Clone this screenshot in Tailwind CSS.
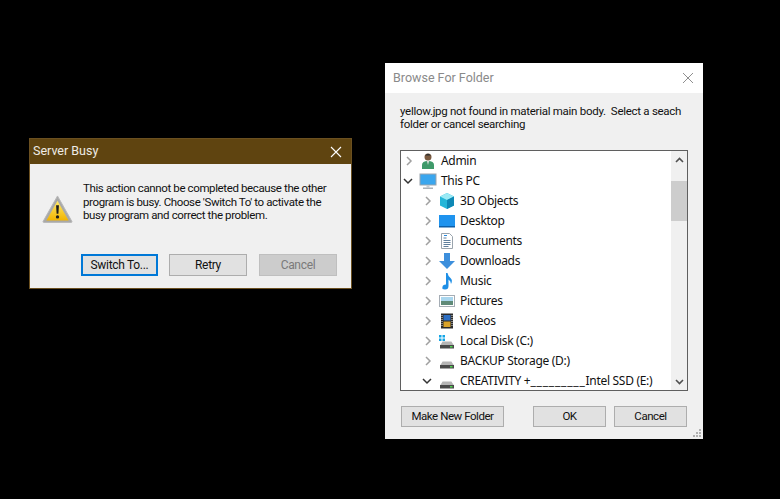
<!doctype html>
<html lang="en"><head><meta charset="utf-8"><title>Dialogs</title>
<script src="https://cdn.jsdelivr.net/npm/@tailwindcss/browser@4"></script></head>
<body class="bg-black">
<main class="relative w-[780px] h-[499px] bg-black overflow-hidden font-['Roboto',sans-serif] text-[11.5px] tracking-[-0.38px] text-[#111]">

<!-- Server Busy -->
<section class="absolute left-[29px] top-[138px] w-[323px] h-[151px] bg-[#f0f0f0] border border-[#6b5020] flex flex-col">
  <header class="h-[25px] shrink-0 bg-[#5f4410] flex items-center justify-between pl-[3px] pr-[9px] text-white/90 text-[12.5px] tracking-normal">
    <span>Server Busy</span>
    <svg width="12" height="12" viewBox="0 0 12 12" fill="none" stroke="#fff" stroke-width="1.1"><path d="M1 1l10 10M11 1L1 11"/></svg>
  </header>
  <div class="flex-1 flex flex-col pt-[18px] pl-[12px] pr-[14px] pb-[12px]">
    <div class="flex gap-[10px] items-start">
      <svg class="mt-[13px] shrink-0" width="31" height="28" viewBox="0 0 32 29">
        <defs><linearGradient id="w" x1="0" y1="0" x2="0" y2="1"><stop offset="0" stop-color="#ffe96a"/><stop offset="1" stop-color="#f2b400"/></linearGradient></defs>
        <path d="M16 1L31 27.5Q31 28.500 30 28.500H2Q1 28.500 1 27.500Z" fill="#a9a9a9" stroke="#b9b9b9"/>
        <path d="M16 6L27.500 26.500H4.500Z" fill="url(#w)"/>
        <path d="M14.500 10.500h3l-.6 9h-1.800z" fill="#1c1c1c"/><circle cx="16" cy="22.700" r="1.700" fill="#1c1c1c"/>
      </svg>
      <p class="leading-[13.5px] w-[250px]">This action cannot be completed because the other program is busy. Choose 'Switch To' to activate the busy program and correct the problem.</p>
    </div>
    <div class="mt-auto flex justify-end gap-[11px] text-[12px] tracking-[-0.3px]">
      <button class="w-[77px] h-[22px] bg-[#e1e1e1] border-2 border-[#0078d7] flex items-center justify-center">Switch To...</button>
      <button class="w-[78px] h-[22px] bg-[#e1e1e1] border border-[#adadad] flex items-center justify-center">Retry</button>
      <button class="w-[78px] h-[22px] bg-[#cccccc] border border-[#bfbfbf] text-[#7a7a7a] flex items-center justify-center ml-px">Cancel</button>
    </div>
  </div>
</section>

<!-- Browse For Folder -->
<section class="absolute left-[385px] top-[63px] w-[318px] h-[376px] bg-[#f0f0f0] flex flex-col">
  <header class="h-[30px] shrink-0 bg-white flex items-center justify-between pl-[8px] pr-[9px] text-[#8a8a8a] text-[12.5px] tracking-normal">
    <span>Browse For Folder</span>
    <svg width="12" height="12" viewBox="0 0 12 12" fill="none" stroke="#8f8f8f" stroke-width="1"><path d="M1 1l10 10M11 1L1 11"/></svg>
  </header>
  <div class="relative flex-1 flex flex-col px-[15px] pt-[12px]">
    <p class="leading-[13px] w-[290px] h-[26px] tracking-[-0.28px]">yellow.jpg not found in material main body.&nbsp; Select a seach folder or cancel searching</p>
    <div class="mt-[19px] w-[288px] h-[241px] bg-white border border-[#5f5f5f] flex overflow-hidden">
      <ul class="flex-1 min-w-0 flex flex-col font-['Noto_Sans',sans-serif] text-[12px] tracking-[-0.3px]">
        <li class="h-[20px] flex items-center shrink-0">
          <svg class="ml-[3px]" width="10" height="10" viewBox="0 0 10 10" fill="none" stroke="#a0a0a0" stroke-width="1.500"><path d="M3 1l4 4-4 4"/></svg>
          <svg class="ml-[5px]" width="18" height="18" viewBox="0 0 18 18"><circle cx="9" cy="5" r="3.500" fill="#7a5a40"/><path d="M6 3.500Q9 0 12 3.500z" fill="#2f2f2f"/><path d="M3 17v-4q0-4 6-4t6 4v4z" fill="#3f9a6a"/><path d="M8 9h2l-1 4z" fill="#e8e8e8"/></svg>
          <span class="ml-[4px]">Admin</span></li>
        <li class="h-[20px] flex items-center shrink-0">
          <svg class="ml-[2px]" width="10" height="10" viewBox="0 0 10 10" fill="none" stroke="#333" stroke-width="1.500"><path d="M1 3l4 4 4-4"/></svg>
          <svg class="ml-[6px]" width="18" height="18" viewBox="0 0 18 18"><rect x="1" y="2" width="16" height="11" fill="#3aa6ee" stroke="#9aa4ad"/><rect x="7.500" y="13" width="3" height="2.500" fill="#c5ccd2"/><rect x="4" y="15.500" width="10" height="1.500" fill="#aab2b9"/></svg>
          <span class="ml-[4px]">This PC</span></li>
        <li class="h-[20px] flex items-center shrink-0 pl-[22px]">
          <svg width="10" height="10" viewBox="0 0 10 10" fill="none" stroke="#a0a0a0" stroke-width="1.500"><path d="M3 1l4 4-4 4"/></svg>
          <svg class="ml-[5px]" width="18" height="18" viewBox="0 0 18 18"><path d="M9 1l7 3.500v9L9 17l-7-3.500v-9z" fill="#25b6d8"/><path d="M2 4.500L9 8l7-3.500L9 1z" fill="#9beaf5"/><path d="M9 8v9l7-3.500v-9z" fill="#0e88b5"/></svg>
          <span class="ml-[4px]">3D Objects</span></li>
        <li class="h-[20px] flex items-center shrink-0 pl-[22px]">
          <svg width="10" height="10" viewBox="0 0 10 10" fill="none" stroke="#a0a0a0" stroke-width="1.500"><path d="M3 1l4 4-4 4"/></svg>
          <svg class="ml-[5px]" width="18" height="18" viewBox="0 0 18 18"><rect x="1" y="3" width="16" height="12" fill="#1f93ee"/><rect x="1" y="14" width="16" height="1.500" fill="#0d5fa8"/></svg>
          <span class="ml-[4px]">Desktop</span></li>
        <li class="h-[20px] flex items-center shrink-0 pl-[22px]">
          <svg width="10" height="10" viewBox="0 0 10 10" fill="none" stroke="#a0a0a0" stroke-width="1.500"><path d="M3 1l4 4-4 4"/></svg>
          <svg class="ml-[5px]" width="18" height="18" viewBox="0 0 18 18"><path d="M3.500 1.500h8l3 3v12h-11z" fill="#fff" stroke="#9aa4ad"/><path d="M5.500 6h3M5.500 8.500h7M5.500 10.500h7M5.500 12.500h7M5.500 14.500h5" stroke="#5f7f9c"/><path d="M6 3.500h3" stroke="#2a8ade"/></svg>
          <span class="ml-[4px]">Documents</span></li>
        <li class="h-[20px] flex items-center shrink-0 pl-[22px]">
          <svg width="10" height="10" viewBox="0 0 10 10" fill="none" stroke="#a0a0a0" stroke-width="1.500"><path d="M3 1l4 4-4 4"/></svg>
          <svg class="ml-[5px]" width="18" height="18" viewBox="0 0 18 18"><path d="M6 1h6v8h5l-8 8-8-8h5z" fill="#3d8fdc"/></svg>
          <span class="ml-[4px]">Downloads</span></li>
        <li class="h-[20px] flex items-center shrink-0 pl-[22px]">
          <svg width="10" height="10" viewBox="0 0 10 10" fill="none" stroke="#a0a0a0" stroke-width="1.500"><path d="M3 1l4 4-4 4"/></svg>
          <svg class="ml-[5px]" width="18" height="18" viewBox="0 0 18 18"><path d="M8 1h1.500q.5 3 3 5t.5 6q0-3-2.500-4.500V14q0 3.500-3.500 3.500T4.500 15q0-2.500 3.500-2.500z" fill="#1e8fe6"/></svg>
          <span class="ml-[4px]">Music</span></li>
        <li class="h-[20px] flex items-center shrink-0 pl-[22px]">
          <svg width="10" height="10" viewBox="0 0 10 10" fill="none" stroke="#a0a0a0" stroke-width="1.500"><path d="M3 1l4 4-4 4"/></svg>
          <svg class="ml-[5px]" width="18" height="18" viewBox="0 0 18 18"><rect x="1.500" y="3.500" width="15" height="11" fill="#fff" stroke="#a5adb5"/><rect x="3" y="5" width="12" height="4" fill="#a9d6ee"/><rect x="3" y="9" width="12" height="4" fill="#5f8a78"/></svg>
          <span class="ml-[4px]">Pictures</span></li>
        <li class="h-[20px] flex items-center shrink-0 pl-[22px]">
          <svg width="10" height="10" viewBox="0 0 10 10" fill="none" stroke="#a0a0a0" stroke-width="1.500"><path d="M3 1l4 4-4 4"/></svg>
          <svg class="ml-[5px]" width="18" height="18" viewBox="0 0 18 18"><rect x="3" y="1.500" width="12" height="15" fill="#2a2a2a"/><rect x="5.500" y="3" width="7" height="5.500" fill="#2d6fc4"/><rect x="5.500" y="9.500" width="7" height="5.500" fill="#d9a32a"/><path d="M4 3v12M14 3v12" stroke="#ddd" stroke-dasharray="1 1"/></svg>
          <span class="ml-[4px]">Videos</span></li>
        <li class="h-[20px] flex items-center shrink-0 pl-[22px]">
          <svg width="10" height="10" viewBox="0 0 10 10" fill="none" stroke="#a0a0a0" stroke-width="1.500"><path d="M3 1l4 4-4 4"/></svg>
          <svg class="ml-[5px]" width="18" height="18" viewBox="0 0 18 18"><path d="M1 3h2.500v2.500H1zM4.500 3H7v2.500H4.500zM1 6.500h2.500V9H1zM4.500 6.500H7V9H4.500z" fill="#12a5e6"/><path d="M4 10.500q0-1 1-1h8q1 0 1 1l2 3H2z" fill="#b5b5b5"/><rect x="2" y="13" width="14" height="3.500" fill="#4a4a4a"/><rect x="12" y="14" width="2.500" height="1.500" fill="#4fd04f"/></svg>
          <span class="ml-[4px]">Local Disk (C:)</span></li>
        <li class="h-[20px] flex items-center shrink-0 pl-[22px]">
          <svg width="10" height="10" viewBox="0 0 10 10" fill="none" stroke="#a0a0a0" stroke-width="1.500"><path d="M3 1l4 4-4 4"/></svg>
          <svg class="ml-[5px]" width="18" height="18" viewBox="0 0 18 18"><path d="M4 10.500q0-1 1-1h8q1 0 1 1l2 3H2z" fill="#b5b5b5"/><rect x="2" y="13" width="14" height="3.500" fill="#4a4a4a"/><rect x="12" y="14" width="2.500" height="1.500" fill="#4fd04f"/></svg>
          <span class="ml-[4px]">BACKUP Storage (D:)</span></li>
        <li class="h-[20px] flex items-center shrink-0 pl-[21px]">
          <svg width="10" height="10" viewBox="0 0 10 10" fill="none" stroke="#333" stroke-width="1.500"><path d="M1 3l4 4 4-4"/></svg>
          <svg class="ml-[6px]" width="18" height="18" viewBox="0 0 18 18"><path d="M4 10.500q0-1 1-1h8q1 0 1 1l2 3H2z" fill="#b5b5b5"/><rect x="2" y="13" width="14" height="3.500" fill="#4a4a4a"/><rect x="12" y="14" width="2.500" height="1.500" fill="#4fd04f"/></svg>
          <span class="ml-[4px] whitespace-pre">CREATIVITY +<span class="tracking-[0.8px]">_________</span>Intel SSD (E:)</span></li>
      </ul>
      <div class="w-[16px] shrink-0 bg-[#f0f0f0] flex flex-col">
        <div class="h-[17px] flex items-center justify-center"><svg width="9" height="6" viewBox="0 0 9 6" fill="none" stroke="#505050" stroke-width="1.600"><path d="M1 5l3.500-3.500L8 5"/></svg></div>
        <div class="mt-[13px] h-[40px] bg-[#cdcdcd]"></div>
        <div class="mt-auto h-[17px] flex items-center justify-center"><svg width="9" height="6" viewBox="0 0 9 6" fill="none" stroke="#505050" stroke-width="1.600"><path d="M1 1l3.500 3.500L8 1"/></svg></div>
      </div>
    </div>
    <div class="mt-[15px] flex items-center pl-px pr-px tracking-[-0.45px]">
      <button class="w-[103px] h-[21px] bg-[#e1e1e1] border border-[#adadad] flex items-center justify-center">Make New Folder</button>
      <button class="ml-[29px] w-[73px] h-[21px] bg-[#e1e1e1] border border-[#adadad] flex items-center justify-center">OK</button>
      <button class="ml-[8px] w-[73px] h-[21px] bg-[#e1e1e1] border border-[#adadad] flex items-center justify-center">Cancel</button>
    </div>
    <svg class="absolute right-[1px] bottom-[1px]" width="10" height="10" viewBox="0 0 10 10" fill="#b0b0b0"><path d="M7 1h2v2H7zM4 4h2v2H4zM7 4h2v2H7zM1 7h2v2H1zM4 7h2v2H4zM7 7h2v2H7z"/></svg>
  </div>
</section>
</main>
</body></html>
